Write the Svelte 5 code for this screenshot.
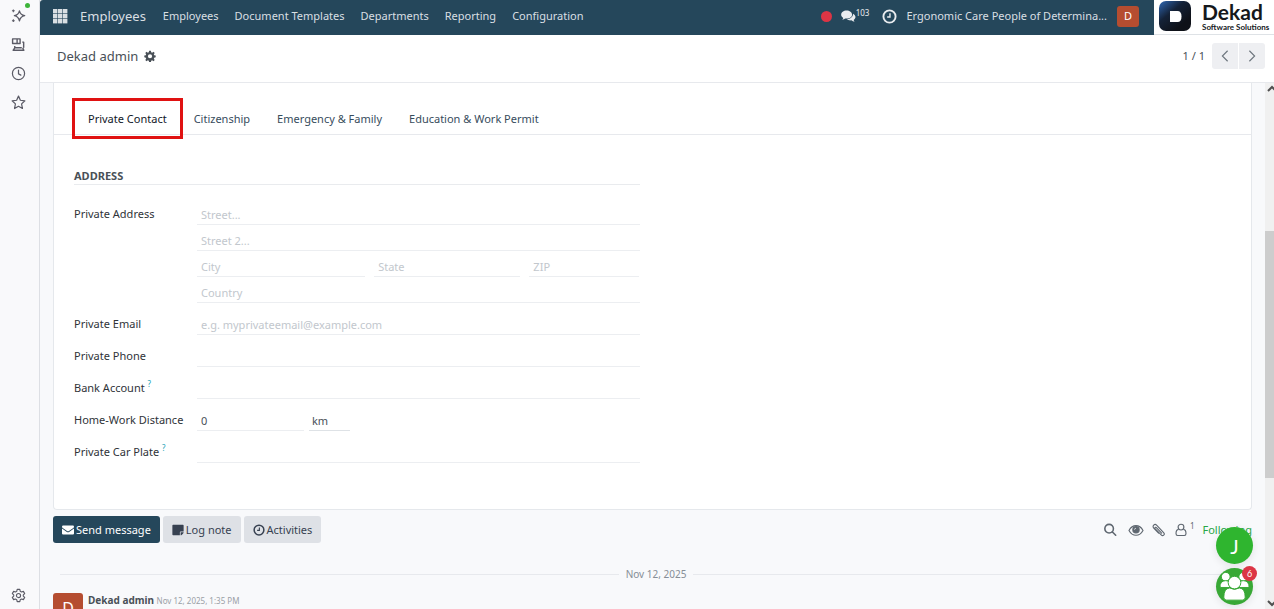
<script lang="ts">
  const menus = ['Employees', 'Document Templates', 'Departments', 'Reporting', 'Configuration'];
  const tabs = ['Private Contact', 'Citizenship', 'Emergency & Family', 'Education & Work Permit'];

  let activeTab = $state('Private Contact');
  let distance = $state('0');
  let unit = $state('km');
</script>

{#snippet clock()}
  <svg class="icon" viewBox="0 0 16 16" fill="none" stroke="currentColor" stroke-width="2">
    <circle cx="8" cy="8" r="6.5" />
    <path d="M8.5 4.5v4H5.5" stroke-width="1.5" />
  </svg>
{/snippet}

<div class="app">
  <aside class="rail">
    <button class="rail-button" aria-label="Assistant">
      <svg viewBox="0 0 16 16" fill="none" stroke="currentColor" stroke-width="1.4" stroke-linejoin="round">
        <path d="M9 3Q10 7.300 14.600 8.200Q10 9.200 9 13.600Q8 9.200 3.600 8.200Q8 7.300 9 3Z" />
        <path d="M2.500 1.500v3M1 3h3M2.500 12v3M1 13.500h3" stroke-width="1.1" />
      </svg>
      <span class="online"></span>
    </button>
    <button class="rail-button" aria-label="Devices">
      <svg viewBox="0 0 16 16" fill="none" stroke="currentColor" stroke-width="1.5" stroke-linejoin="round">
        <path d="M1.700 2h8v5h-8zM6.500 2v5M12 5.500h1.500v6M4 9.500v2h7.500M1.700 14.200h12.600M4 11.500l-1.500 2.500M12.500 11.500l1 2.500" />
      </svg>
    </button>
    <button class="rail-button" aria-label="History">
      <svg viewBox="0 0 16 16" fill="none" stroke="currentColor" stroke-width="1.3" stroke-linecap="round">
        <circle cx="8" cy="8" r="6.500" />
        <path d="M8 4.300v4l2.500 1.400" />
      </svg>
    </button>
    <button class="rail-button" aria-label="Favorites">
      <svg viewBox="0 0 16 16" fill="none" stroke="currentColor" stroke-width="1.3" stroke-linejoin="round">
        <path d="M8 1.200l2 4.400 4.800.6-3.500 3.300.9 4.900L8 12l-4.200 2.400.9-4.900L1.200 6.200l4.800-.6z" />
      </svg>
    </button>
    <button class="rail-button settings" aria-label="Settings">
      <svg viewBox="0 0 16 16" fill="none" stroke="currentColor" stroke-width="1.2" stroke-linejoin="round">
        <path d="M6.600 1.500h2.800l.5 2 1.300.7 2-.6 1.400 2.400L13.100 7.400v1.200l1.500 1.400-1.400 2.400-2-.6-1.300.7-.5 2H6.600l-.5-2-1.300-.7-2 .6L1.400 10l1.500-1.400V7.400L1.400 6l1.400-2.400 2 .6 1.300-.7z" />
        <circle cx="8" cy="8" r="2.200" />
      </svg>
    </button>
  </aside>

  <div class="main">
    <header class="topbar">
      <nav class="navbar">
        <button class="apps" aria-label="Apps">
          <svg viewBox="0 0 15 15" fill="currentColor">
            {#each [0, 5, 10] as y}
              {#each [0, 5, 10] as x}
                <rect {x} {y} width="4.400" height="4.400" />
              {/each}
            {/each}
          </svg>
        </button>
        <a class="brand" href="#employees">Employees</a>
        <div class="menus">
          {#each menus as menu}
            <a href="#menu">{menu}</a>
          {/each}
        </div>
        <div class="systray">
          <span class="record"></span>
          <button class="messages" aria-label="Messages">
            <svg class="chat" viewBox="0 0 18 16" fill="currentColor">
              <path d="M6.700 1.500C3 1.500.2 3.700.2 6.400c0 1.600 1 3 2.500 3.900-.2.900-.7 1.500-1.300 2.200 1.600-.2 2.700-.7 3.700-1.500 4.600.6 8.200-1.600 8.200-4.600 0-2.700-3-4.900-6.600-4.900z" />
              <path d="M14.400 5.200c.2 3.500-2.800 6.300-7.400 6.700 1.400 1.200 3.400 1.600 5.400 1.300 1.200.9 2.500 1.500 4 1.600-.6-.7-1-1.300-1.200-2.100 3-1.700 3-5.400-.8-7.500z" />
            </svg>
            <span class="count">103</span>
          </button>
          <button class="activity" aria-label="Activities">{@render clock()}</button>
          <span class="company">Ergonomic Care People of Determina...</span>
          <button class="avatar">D</button>
        </div>
      </nav>
      <div class="logo">
        <svg class="logo-mark" viewBox="0 0 32 30">
          <defs>
            <linearGradient id="mark" x1="0" y1="0" x2="0.700" y2="0.800">
              <stop offset="0" stop-color="#2f68b4" />
              <stop offset="0.500" stop-color="#142238" />
              <stop offset="1" stop-color="#0e1118" />
            </linearGradient>
          </defs>
          <rect width="32" height="30" rx="7" fill="url(#mark)" />
          <path d="M11 10h7.500q4 0 4 5.500t-4 5.500H11.500q-.5 0-.5-.5z" fill="#fff" />
        </svg>
        <div class="logo-text">
          <strong>Dekad</strong>
          <small>Software Solutions</small>
        </div>
      </div>
    </header>

    <div class="control-panel">
      <h1>Dekad admin</h1>
      <button class="gear" aria-label="Actions">
        <svg class="icon" viewBox="0 0 16 16" fill="currentColor" fill-rule="evenodd">
          <path d="M6.800 1h2.400l.4 2 1.300.5 1.700-1.200 1.700 1.700-1.200 1.700.5 1.300 2 .4v2.400l-2 .4-.5 1.300 1.200 1.700-1.700 1.700-1.700-1.200-1.300.5-.4 2H6.800l-.4-2-1.300-.5-1.700 1.200-1.700-1.700 1.200-1.700-.5-1.300-2-.4V7.400l2-.4.5-1.300L1.700 4l1.700-1.700 1.700 1.200L6.400 3zM8 5.500a2.800 2.800 0 1 0 0 5.600 2.800 2.800 0 0 0 0-5.600z" />
        </svg>
      </button>
      <div class="pager">
        <span>1 / 1</span>
        <div class="pager-buttons">
          <button aria-label="Previous">
            <svg viewBox="0 0 12 16" fill="none" stroke="currentColor" stroke-width="1.300"><path d="M9 2L3 8l6 6" /></svg>
          </button>
          <button aria-label="Next">
            <svg viewBox="0 0 12 16" fill="none" stroke="currentColor" stroke-width="1.300"><path d="M3 2l6 6-6 6" /></svg>
          </button>
        </div>
      </div>
    </div>

    <div class="scroll-area">
      <main class="content">
        <section class="sheet">
          <div class="tabs" role="tablist">
            {#each tabs as tab}
              <button
                class="tab"
                class:active={tab === activeTab}
                role="tab"
                aria-selected={tab === activeTab}
                onclick={() => (activeTab = tab)}
              >{tab}</button>
            {/each}
          </div>

          <form class="form">
            <div class="group">
              <h2>Address</h2>
              <div class="fields">
                <label for="street">Private Address</label>
                <div class="address">
                  <input id="street" placeholder="Street..." />
                  <input aria-label="Street 2" placeholder="Street 2..." />
                  <div class="city-row">
                    <input aria-label="City" placeholder="City" />
                    <input aria-label="State" placeholder="State" />
                    <input aria-label="ZIP" placeholder="ZIP" />
                  </div>
                  <input aria-label="Country" placeholder="Country" />
                </div>

                <label for="email">Private Email</label>
                <input id="email" type="email" placeholder="e.g. myprivateemail@example.com" />

                <label for="phone">Private Phone</label>
                <input id="phone" type="tel" />

                <label for="bank">Bank Account <sup>?</sup></label>
                <input id="bank" />

                <label for="distance">Home-Work Distance</label>
                <div class="distance">
                  <input id="distance" bind:value={distance} />
                  <select aria-label="Distance unit" bind:value={unit}>
                    <option>km</option>
                    <option>mi</option>
                  </select>
                </div>

                <label for="plate">Private Car Plate <sup>?</sup></label>
                <input id="plate" />
              </div>
            </div>
          </form>
        </section>

        <section class="chatter">
          <div class="chatter-bar">
            <button class="btn primary">
              <svg class="icon" viewBox="0 0 16 16" fill="currentColor">
                <path d="M0 3.500Q0 2 1.500 2h13Q16 2 16 3.500q0 1-1 1.800L8.800 9.500q-.8.500-1.600 0L1 5.300Q0 4.500 0 3.500zM0 5.900l6.500 4.600q1.500 1 3 0L16 5.900v6.600q0 1.500-1.500 1.500h-13Q0 14 0 12.500z" />
              </svg>
              Send message
            </button>
            <button class="btn">
              <svg class="icon" viewBox="0 0 16 16" fill="currentColor">
                <path d="M1.500 1h13q1 0 1 1v8h-4q-1 0-1 1v4h-9q-1 0-1-1V2q0-1 1-1zM11.500 11h4q0 1-.7 1.700l-1.600 1.600q-.7.700-1.700.7z" />
              </svg>
              Log note
            </button>
            <button class="btn">
              {@render clock()}
              Activities
            </button>
            <div class="chatter-tools">
              <button class="search" aria-label="Search messages">
                <svg viewBox="0 0 16 16" fill="none" stroke="currentColor" stroke-width="1.800" stroke-linecap="round">
                  <circle cx="7" cy="6.500" r="4.900" /><path d="M10.500 10l4 4" />
                </svg>
              </button>
              <button aria-label="Preview">
                <svg class="eye" viewBox="0 0 18 16" fill="none" stroke="currentColor" stroke-width="1.300">
                  <path d="M1 8.500Q4 3 9 3t8 5.500Q14 14 9 14T1 8.500z" />
                  <circle cx="9" cy="7.800" r="3.600" fill="currentColor" />
                  <path d="M7.300 7.700Q7.300 6 9 6" stroke="#f8f9fa" stroke-width="0.800" />
                </svg>
              </button>
              <button aria-label="Attach files">
                <svg viewBox="0 0 16 16" fill="none" stroke="currentColor" stroke-width="1.300" stroke-linecap="round">
                  <path d="M11 11.500L5 5.300c-1-1-2.300.2-1.300 1.300l6.800 7c2 2 4.800-.5 2.800-2.700L5.500 2.700C3 .2-.3 3.300 2 5.800l5.500 5.700" />
                </svg>
              </button>
              <button class="followers" aria-label="Followers">
                <svg viewBox="0 0 16 16" fill="none" stroke="currentColor" stroke-width="1.300">
                  <circle cx="8" cy="4.700" r="3.300" />
                  <path d="M5.300 7.300C3.200 7.500 2.300 9.500 2.300 12q0 2.300 1.800 2.300h7.800q1.800 0 1.800-2.300c0-2.500-.9-4.500-3-4.700" />
                </svg>
                <span>1</span>
              </button>
              <button class="following">Following</button>
            </div>
          </div>

          <div class="date-line"><span>Nov 12, 2025</span></div>

          <article class="message">
            <div class="message-avatar">D</div>
            <p><strong>Dekad admin</strong> <time>Nov 12, 2025, 1:35 PM</time></p>
          </article>
        </section>
      </main>

      <div class="scrollbar">
        <svg viewBox="0 0 12 12" fill="none" stroke="#505050" stroke-width="2"><path d="M3 8l4-4 4 4" /></svg>
        <div class="thumb"></div>
        <svg class="down" viewBox="0 0 12 12" fill="none" stroke="#505050" stroke-width="2"><path d="M3 4l4 4 4-4" /></svg>
      </div>
    </div>
  </div>

  <div class="bubbles">
    <button class="bubble">J</button>
    <button class="bubble group-chat" aria-label="Group chat">
      <svg viewBox="0 0 38 38" fill="#fff" stroke="#38a835" stroke-width="1">
        <circle cx="10" cy="9" r="4.500" />
        <circle cx="28" cy="9" r="4.500" />
        <path d="M4 20q0-7 6-7t6 7H5q-1 0-1-1zM22 20q0-7 6-7t6 7z" />
        <circle cx="19" cy="15" r="6.500" />
        <path d="M8 30q0-9 6-9.500 5 3 10 0 6 .5 6 9.500 0 3-3 3H11q-3 0-3-3z" />
      </svg>
      <span class="badge">6</span>
    </button>
  </div>
</div>

<style>
  :global(body) {
    background: #f8f9fa;
  }

  .app {
    display: flex;
    position: relative;
    height: 100vh;
    overflow: hidden;
    font-family: "Noto Sans", "Open Sans", sans-serif;
    font-size: 11px;
    line-height: 18px;
    color: #374151;
  }

  button,
  input,
  select {
    font: inherit;
    color: inherit;
    margin: 0;
    padding: 0;
    border: 0;
    border-radius: 0;
    background: none;
  }

  button {
    display: flex;
    align-items: center;
    white-space: nowrap;
    cursor: pointer;
  }

  a {
    color: inherit;
    text-decoration: none;
  }

  svg {
    display: block;
    flex: none;
  }

  .icon {
    width: 12px;
    height: 12px;
  }

  .rail {
    display: flex;
    flex-direction: column;
    gap: 13px;
    flex: none;
    box-sizing: border-box;
    width: 40px;
    padding: 7px 0 6px 11px;
    border-right: 1px solid #dddfe4;
    background: #f9f9fb;
    color: #5b5b66;
  }

  .rail-button {
    position: relative;
    width: 16px;
    height: 16px;
  }

  .rail-button svg {
    width: 15px;
    height: 15px;
  }

  .online {
    position: absolute;
    top: -4px;
    right: -3px;
    width: 5px;
    height: 5px;
    border-radius: 50%;
    background: #3db43a;
  }

  .settings {
    margin-top: auto;
  }

  .main {
    display: flex;
    flex-direction: column;
    flex: 1;
    min-width: 0;
  }

  .topbar {
    display: flex;
    flex: none;
    height: 35px;
  }

  .navbar {
    display: flex;
    align-items: center;
    flex: 1;
    min-width: 0;
    padding: 0 15px 3px 13px;
    border-top-left-radius: 3px;
    background: #25475b;
    color: #d9dfe3;
    white-space: nowrap;
  }

  .apps svg {
    width: 15px;
    height: 15px;
  }

  .brand {
    margin-left: 12px;
    font-size: 13px;
  }

  .menus {
    display: flex;
    gap: 16px;
    margin-left: 17px;
  }

  .systray {
    display: flex;
    align-items: center;
    margin-left: auto;
  }

  .record {
    width: 11px;
    height: 11px;
    border-radius: 50%;
    background: #dc3545;
  }

  .messages {
    margin-left: 9px;
    color: #e9ecef;
  }

  .chat {
    width: 15px;
    height: 14px;
  }

  .count {
    padding-bottom: 7px;
    font-size: 8px;
    line-height: 12px;
  }

  .activity {
    margin: 0 9px 0 13px;
    color: #e9ecef;
  }

  .activity .icon {
    width: 15px;
    height: 15px;
  }

  .avatar {
    justify-content: center;
    width: 22px;
    height: 21px;
    margin-left: 10px;
    border-radius: 3px;
    background: #b54d30;
    color: #fff;
  }

  .logo {
    display: flex;
    align-items: center;
    gap: 11px;
    flex: none;
    box-sizing: border-box;
    width: 120px;
    padding: 0 0 2px 5px;
    border-bottom: 1px solid #dee2e6;
    background: #fff;
    color: #15181c;
    font-family: Lato, sans-serif;
  }

  .logo-mark {
    width: 32px;
    height: 30px;
  }

  .logo-text strong,
  .logo-text small {
    display: block;
    white-space: nowrap;
  }

  .logo-text strong {
    font-size: 21px;
    line-height: 22px;
  }

  .logo-text small {
    font-size: 8px;
    font-weight: 700;
    line-height: 9px;
  }

  .control-panel {
    display: flex;
    align-items: center;
    flex: none;
    box-sizing: border-box;
    height: 48px;
    padding: 0 9px 6px 17px;
    border-bottom: 1px solid #e7e9ed;
    background: #fff;
  }

  h1 {
    margin: 0;
    font-size: 13px;
    font-weight: 400;
    color: #495057;
  }

  .gear {
    margin-left: 6px;
    color: #495057;
  }

  .pager {
    display: flex;
    align-items: center;
    gap: 7px;
    margin-left: auto;
    color: #495057;
  }

  .pager-buttons {
    display: flex;
    gap: 1px;
  }

  .pager-buttons button {
    justify-content: center;
    width: 26px;
    height: 26px;
    border-radius: 3px 0 0 3px;
    background: #eeeff2;
    color: #6c757d;
  }

  .pager-buttons button:last-child {
    border-radius: 0 3px 3px 0;
  }

  .pager-buttons svg {
    width: 12px;
    height: 14px;
  }

  .scroll-area {
    display: flex;
    flex: 1;
    min-height: 0;
  }

  .content {
    flex: 1;
    min-width: 0;
    padding: 0 13px;
    background: #f8f9fb;
    overflow: hidden;
  }

  .sheet {
    padding: 20px 0 46px;
    border: 1px solid #e5e8ec;
    border-top: 0;
    border-radius: 0 0 4px 4px;
    background: #fff;
  }

  .tabs {
    display: flex;
    gap: 1px;
    padding-left: 21px;
    border-bottom: 1px solid #e7e9ed;
  }

  .tab {
    position: relative;
    height: 31px;
    padding: 0 13px;
    color: #374c5c;
  }

  .tab.active {
    color: #111827;
  }

  .tab.active::after {
    content: "";
    position: absolute;
    inset: -5px -3px;
    border: 3px solid #e01212;
    pointer-events: none;
  }

  .form {
    display: grid;
    grid-template-columns: 1fr 1fr;
    gap: 26px;
    padding: 33px 20px 0;
  }

  h2 {
    margin: 0 0 14px;
    padding-bottom: 1px;
    border-bottom: 1px solid #e9ebee;
    font-size: 11px;
    font-weight: 700;
    line-height: 15px;
    text-transform: uppercase;
    color: #495057;
  }

  .fields {
    display: grid;
    grid-template-columns: 117px 1fr;
    gap: 6px;
  }

  label {
    padding-top: 6px;
    color: #2f3338;
    white-space: nowrap;
  }

  sup {
    font-size: 8px;
    line-height: 8px;
    color: #1a9fb5;
  }

  input,
  select {
    box-sizing: border-box;
    width: 100%;
    min-width: 0;
    height: 26px;
    padding: 6px 4px 0;
    border-bottom: 1px solid #eceef1;
    color: #495057;
    outline: none;
    appearance: none;
  }

  select {
    padding: 6px 3px 0;
  }

  input::placeholder {
    color: #c2c7cd;
    opacity: 1;
  }

  .address {
    display: grid;
  }

  .city-row {
    display: grid;
    grid-template-columns: 168fr 146fr 110fr;
    gap: 9px;
  }

  .distance {
    display: flex;
    gap: 5px;
  }

  .distance input {
    width: 107px;
  }

  .distance select {
    width: 41px;
    border-color: #dee2e6;
  }

  .chatter-bar {
    display: flex;
    align-items: center;
    gap: 3px;
    padding-top: 6px;
  }

  .btn {
    gap: 2px;
    height: 27px;
    padding: 0 9px;
    border-radius: 3px;
    background: #dee1e6;
    color: #374151;
  }

  .btn.primary {
    background: #25475b;
    color: #fff;
  }

  .chatter-tools {
    display: flex;
    align-items: center;
    gap: 8px;
    margin-left: auto;
    color: #5f6770;
  }

  .chatter-tools svg {
    width: 14px;
    height: 14px;
  }

  .search {
    margin-right: 3px;
  }

  .chatter-tools .eye {
    width: 16px;
  }

  .followers span {
    padding: 0 0 8px 2px;
    font-size: 8px;
    line-height: 10px;
  }

  .following {
    color: #28a745;
  }

  .date-line {
    display: flex;
    align-items: center;
    gap: 7px;
    padding: 22px 0 0 7px;
    font-size: 10px;
    color: #868e96;
  }

  .date-line::before,
  .date-line::after {
    content: "";
    flex: 1;
    border-top: 1px solid #e7e9ed;
  }

  .message {
    display: flex;
    gap: 5px;
    padding-top: 10px;
  }

  .message-avatar {
    width: 30px;
    height: 30px;
    border-radius: 3px;
    background: #b54d30;
    color: #fff;
    font-size: 16px;
    line-height: 30px;
    text-align: center;
  }

  .message p {
    margin: 0;
    font-size: 10px;
    line-height: 14px;
    color: #495057;
  }

  .message time {
    font-size: 8px;
    color: #9aa0a6;
  }

  .scrollbar {
    display: flex;
    flex-direction: column;
    flex: none;
    width: 9px;
    background: #f0f0f0;
    overflow: hidden;
  }

  .scrollbar svg {
    width: 12px;
    height: 12px;
  }

  .thumb {
    height: 47%;
    margin-top: 136px;
    background: #cdcdcd;
  }

  .scrollbar .down {
    margin-top: auto;
  }

  .bubbles {
    display: flex;
    flex-direction: column;
    gap: 4px;
    position: absolute;
    right: 21px;
    bottom: 4px;
  }

  .bubble {
    justify-content: center;
    position: relative;
    width: 37px;
    height: 37px;
    border-radius: 50%;
    background: #2fb52f;
    box-shadow: 0 2px 8px #00000018;
    color: #fff;
    font-family: Lato, sans-serif;
    font-size: 20px;
  }

  .group-chat {
    background: #38a835;
  }

  .group-chat svg {
    width: 37px;
    height: 37px;
  }

  .badge {
    position: absolute;
    top: -2px;
    right: -4px;
    width: 15px;
    height: 15px;
    border-radius: 50%;
    background: #dc3545;
    font-size: 9px;
    line-height: 15px;
    text-align: center;
  }
</style>
